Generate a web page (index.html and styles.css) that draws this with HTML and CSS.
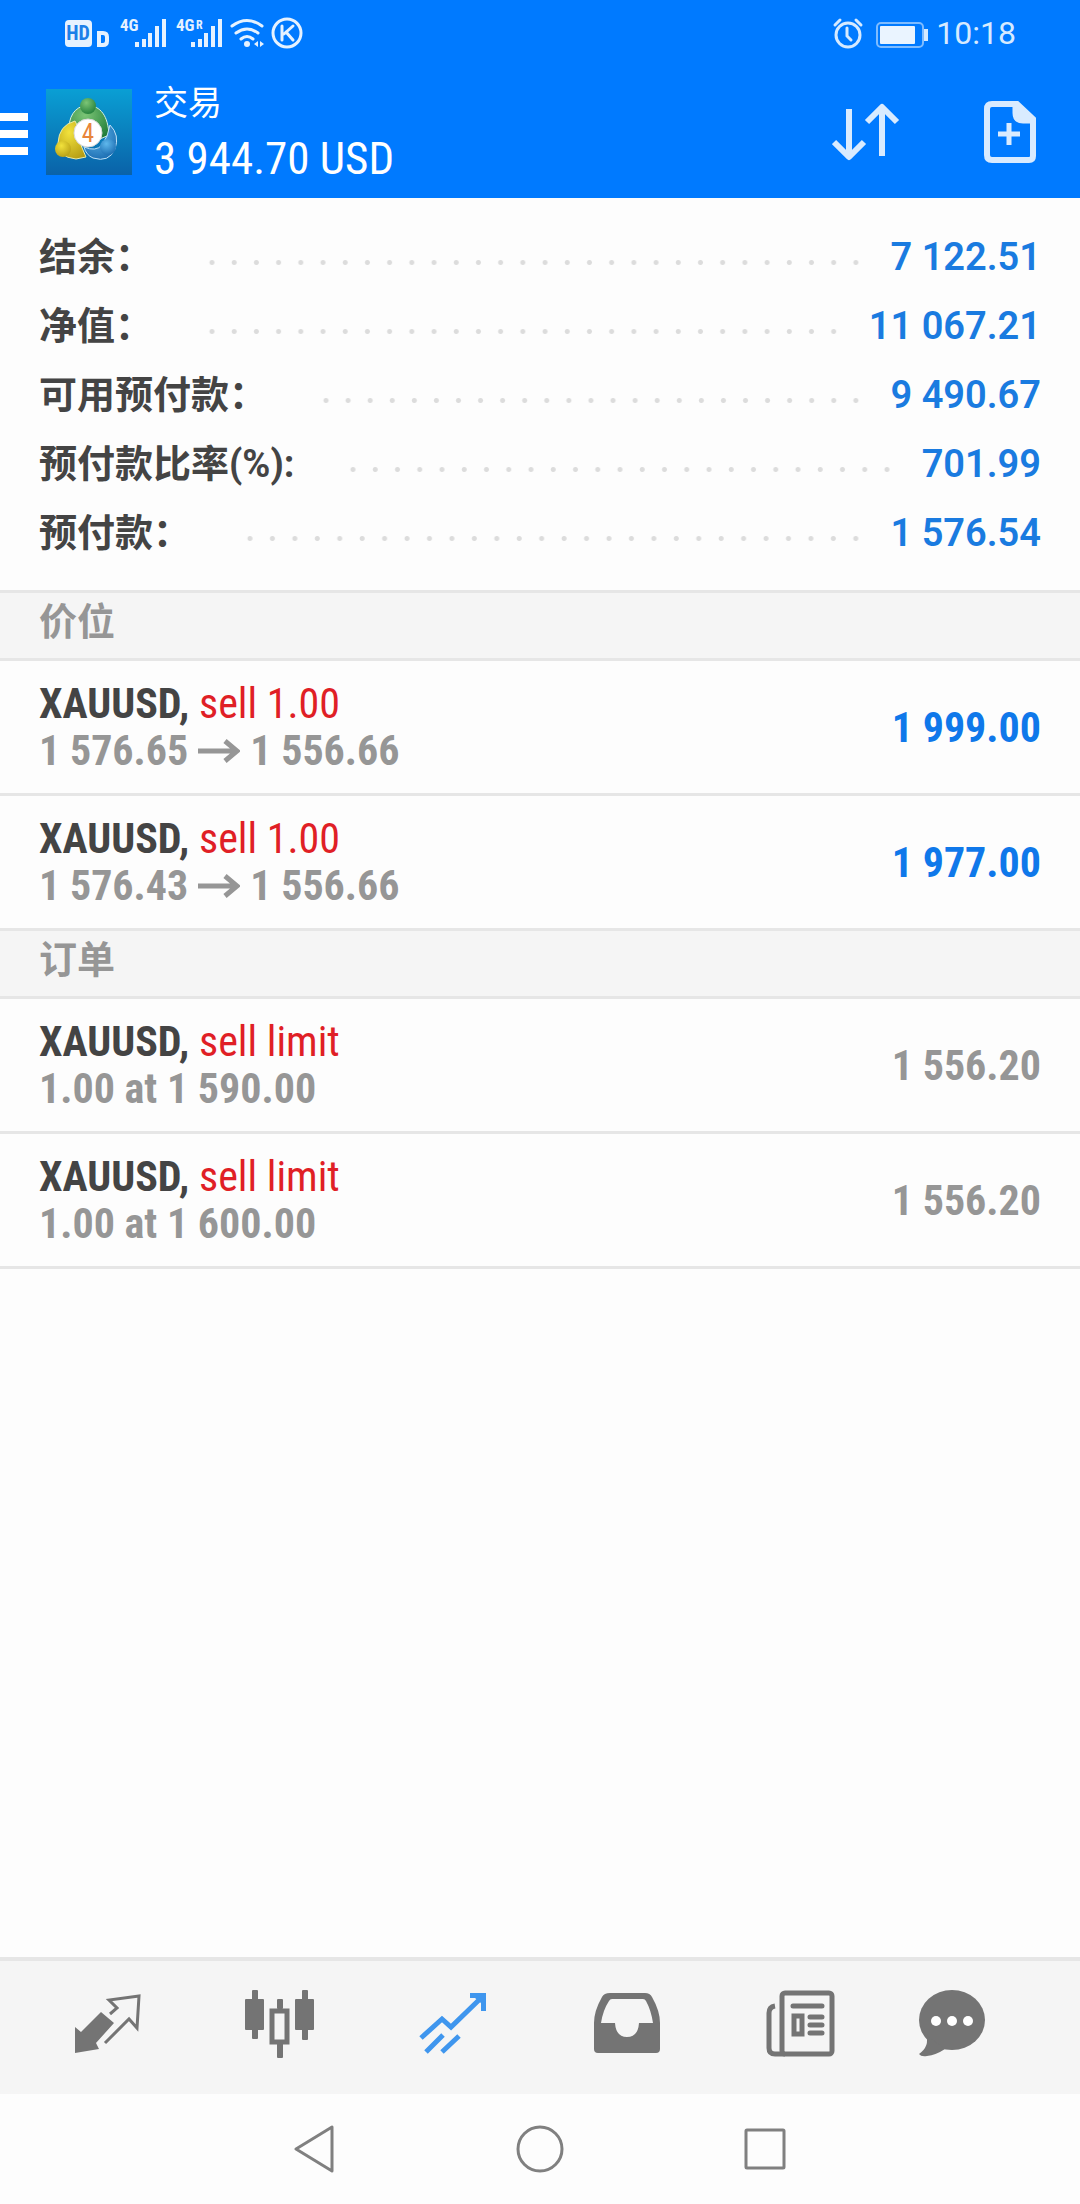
FILE: index.html
```html
<!DOCTYPE html>
<html lang="zh-CN">
<head>
<meta charset="utf-8">
<meta name="viewport" content="width=device-width, initial-scale=1">
<title>交易</title>
<link rel="stylesheet" href="styles.css">
</head>
<body>
<header class="top">
  <div class="status">
    <svg class="status-icons" width="240" height="40" viewBox="0 -4 240 40" aria-hidden="true">
      <rect x="1" y="3" width="27" height="27" rx="4" fill="#e6f2ff"/>
      <text x="14" y="23" class="hd">HD</text>
      <path d="M35 16h4q4 0 4 4v4q0 4-4 4h-4z" fill="none" stroke="#e6f2ff" stroke-width="4"/>
      <text x="56" y="14" class="net">4G</text>
      <path d="M73 30v-5M80 30v-8M86 30v-14M93 30V9M100 30V2" stroke="#e6f2ff" stroke-width="4"/>
      <text x="112" y="14" class="net">4G</text>
      <text x="132" y="12" class="roam">R</text>
      <path d="M129 30v-5M136 30v-8M142 30v-14M149 30V9M156 30V2" stroke="#e6f2ff" stroke-width="4"/>
      <g fill="none" stroke="#e6f2ff" stroke-width="3" stroke-linecap="round">
        <path d="M168 9q15-11 30 0M172 16q11-8 22 0M177 22q6-5 12 0"/>
        <circle cx="223" cy="16" r="14"/>
        <path d="M218 9v14M229 9l-9 8M222 15l7 8"/>
      </g>
      <circle cx="183" cy="27" r="3" fill="#e6f2ff"/>
      <path d="M190 27l4-3v6zM200 27l-4-3v6z" fill="#e6f2ff"/>
    </svg>
    <div class="status-right">
      <svg width="96" height="32" viewBox="0 0 96 32" aria-hidden="true">
        <g fill="none" stroke="#d6eaff" stroke-width="3" stroke-linecap="round">
          <circle cx="16" cy="18" r="12"/>
          <path d="M15 11v8l4 4M3 8l5-5M29 8l-5-5"/>
        </g>
        <rect x="45" y="6" width="46" height="24" rx="4" fill="none" stroke="#7fbcff" stroke-width="2"/>
        <rect x="48" y="9" width="35" height="18" rx="1" fill="#eaf4ff"/>
        <path d="M92 12h4v12h-4z" fill="#d6eaff"/>
      </svg>
      <time class="clock">10:18</time>
    </div>
  </div>
  <div class="bar">
    <button class="icon-btn menu" aria-label="菜单">
      <svg width="28" height="46" viewBox="0 -4 28 46"><path d="M0 4h28M0 21h28M0 38h28" stroke="#fff" stroke-width="8"/></svg>
    </button>
    <svg class="logo" width="86" height="86" viewBox="0 0 86 86" aria-hidden="true">
      <defs>
        <linearGradient id="sky" x1="0" y1="0" x2="0" y2="1"><stop offset="0" stop-color="#0a9fd4"/><stop offset="1" stop-color="#0a62a8"/></linearGradient>
        <radialGradient id="leaf" cx=".4" cy=".3" r=".8"><stop offset="0" stop-color="#7cc576"/><stop offset="1" stop-color="#1d7a36"/></radialGradient>
        <radialGradient id="sun" cx=".4" cy=".3" r=".8"><stop offset="0" stop-color="#f2e23c"/><stop offset="1" stop-color="#b39a12"/></radialGradient>
        <radialGradient id="sea" cx=".4" cy=".3" r=".8"><stop offset="0" stop-color="#5fb8ec"/><stop offset="1" stop-color="#1767ad"/></radialGradient>
      </defs>
      <rect width="86" height="86" fill="url(#sky)"/>
      <path d="M23 44c-1-16 5-26 18-28 14 1 21 11 22 30l-9 4q-4-16-13-16t-10 10z" fill="url(#leaf)" stroke="#d8f0e0"/>
      <circle cx="42" cy="17" r="8" fill="url(#leaf)"/>
      <path d="M29 32q-16 4-17 22-1 14 18 16l10-2-6-14q-6-6-2-16z" fill="url(#sun)" stroke="#e8eaa8"/>
      <circle cx="17" cy="60" r="8" fill="url(#sun)"/>
      <path d="M64 36q10 10 5 24-6 14-22 9-7-3-9-11 12 5 18-2 6-8 8-20z" fill="url(#sea)" stroke="#bfe2f8"/>
      <circle cx="62" cy="58" r="8" fill="url(#sea)"/>
      <circle cx="42" cy="44" r="14" fill="#fff" stroke="#d9d9d9"/>
      <text x="42" y="53" class="logo-num">4</text>
    </svg>
    <div class="heading">
      <h1 class="title">交易</h1>
      <div class="profit">3 944.70 USD</div>
    </div>
    <div class="actions">
      <button class="icon-btn" aria-label="排序">
        <svg width="68" height="60" viewBox="0 0 68 60" fill="none" stroke="#d9ebff" stroke-width="6" stroke-linejoin="round"><path d="M17 7v48M2 40l15 15 15-15M50 54V5M35 20L50 5l15 15"/></svg>
      </button>
      <button class="icon-btn" aria-label="新订单">
        <svg width="52" height="62" viewBox="0 0 52 62"><path d="M8 3h25l16 15v37q0 4-4 4H8q-5 0-5-5V8q0-5 5-5z" fill="none" stroke="#d9ebff" stroke-width="6"/><path d="M31 3l18 17H39q-8 0-8-8zM14 33h22M25 22v22" fill="#d9ebff" stroke="#d9ebff" stroke-width="5"/></svg>
      </button>
    </div>
  </div>
</header>

<main class="content">
  <dl class="summary">
    <div class="sum-row"><dt>结余：</dt><dd>7 122.51</dd></div>
    <div class="sum-row"><dt>净值：</dt><dd>11 067.21</dd></div>
    <div class="sum-row"><dt>可用预付款：</dt><dd>9 490.67</dd></div>
    <div class="sum-row"><dt>预付款比率(%):</dt><dd>701.99</dd></div>
    <div class="sum-row"><dt>预付款：</dt><dd>1 576.54</dd></div>
  </dl>

  <section>
    <h2 class="section-title">价位</h2>
    <ul class="list">
      <li class="item">
        <div><div class="symbol"><b>XAUUSD,</b> <span class="side">sell 1.00</span></div>
        <div class="detail">1 576.65 <svg class="arrow" width="42" height="24" viewBox="0 0 42 24" role="img" aria-label="至"><path d="M0 12h39M27 2l12 10-12 10"/></svg> 1 556.66</div></div>
        <div class="value gain">1 999.00</div>
      </li>
      <li class="item">
        <div><div class="symbol"><b>XAUUSD,</b> <span class="side">sell 1.00</span></div>
        <div class="detail">1 576.43 <svg class="arrow" width="42" height="24" viewBox="0 0 42 24" role="img" aria-label="至"><path d="M0 12h39M27 2l12 10-12 10"/></svg> 1 556.66</div></div>
        <div class="value gain">1 977.00</div>
      </li>
    </ul>
  </section>

  <section>
    <h2 class="section-title">订单</h2>
    <ul class="list">
      <li class="item">
        <div><div class="symbol"><b>XAUUSD,</b> <span class="side">sell limit</span></div>
        <div class="detail">1.00 at 1 590.00</div></div>
        <div class="value">1 556.20</div>
      </li>
      <li class="item">
        <div><div class="symbol"><b>XAUUSD,</b> <span class="side">sell limit</span></div>
        <div class="detail">1.00 at 1 600.00</div></div>
        <div class="value">1 556.20</div>
      </li>
    </ul>
  </section>
</main>

<nav class="tabs">
  <button class="icon-btn" aria-label="报价">
    <svg width="70" height="70" viewBox="0 0 70 70"><path d="M3 38l6 5 20-20 13 11-18 20 3 6-24 4z" fill="#747474"/><path d="M38 25l7-6-8-8 30-4-2 32-8-9-24 24" fill="none" stroke="#747474" stroke-width="3"/></svg>
  </button>
  <button class="icon-btn" aria-label="图表">
    <svg width="70" height="70" viewBox="0 0 70 70" fill="#747474"><rect x="0" y="10" width="19" height="31" rx="1"/><rect x="7" y="1" width="6" height="49" rx="1"/><rect x="27" y="22" width="15" height="31" fill="none" stroke="#747474" stroke-width="5"/><rect x="32" y="10" width="6" height="10" rx="1"/><rect x="32" y="54" width="6" height="15" rx="1"/><rect x="50" y="10" width="19" height="31" rx="1"/><rect x="57" y="1" width="6" height="50" rx="1"/></svg>
  </button>
  <button class="icon-btn" aria-label="交易" aria-current="page">
    <svg width="70" height="70" viewBox="0 0 70 70"><path d="M3 49l21-19 9 8L63 9M8 63l17-17M24 63l17-16" fill="none" stroke="#3f96ee" stroke-width="5"/><path d="M52 4h16v18h-5V14l-6-5h-5z" fill="#3f96ee"/></svg>
  </button>
  <button class="icon-btn" aria-label="历史">
    <svg width="70" height="70" viewBox="0 0 70 70"><path fill="#747474" fill-rule="evenodd" d="M18 4h35q5 0 7 4 8 14 8 26v26q0 4-4 4H6q-4 0-4-4V34Q2 22 10 8q2-4 8-4zM20 10q-2 0-3 2-6 9-8 22h14q1 14 12 14t12-14h14q-2-13-7-22-1-2-3-2z"/></svg>
  </button>
  <button class="icon-btn" aria-label="新闻">
    <svg width="70" height="70" viewBox="0 0 70 70" fill="none" stroke="#747474" stroke-width="5"><rect x="17" y="4" width="50" height="61" rx="3"/><path d="M10 17q-6 1-6 7v35q0 6 6 6h10"/><path d="M28 17h29M45 28h12M45 36h12M45 44h12" stroke-linecap="round"/><rect x="29" y="27" width="8" height="18"/></svg>
  </button>
  <button class="icon-btn" aria-label="消息">
    <svg width="70" height="70" viewBox="0 0 70 70"><ellipse cx="35" cy="31" rx="33" ry="30" fill="#747474"/><path d="M9 46q4 11-7 19 2 3 8 2 9-1 18-7z" fill="#747474"/><g fill="#fff"><circle cx="19" cy="32" r="5"/><circle cx="35" cy="32" r="5"/><circle cx="51" cy="32" r="5"/></g></svg>
  </button>
</nav>

<nav class="system">
  <button class="icon-btn" aria-label="返回"><svg width="48" height="48" viewBox="0 0 48 48"><path d="M41 2v44L5 24z"/></svg></button>
  <button class="icon-btn" aria-label="主屏幕"><svg width="48" height="48" viewBox="0 0 48 48"><circle cx="24" cy="24" r="22"/></svg></button>
  <button class="icon-btn" aria-label="最近任务"><svg width="48" height="48" viewBox="0 0 48 48"><rect x="5" y="5" width="38" height="38" rx="1"/></svg></button>
</nav>
</body>
</html>
```
FILE: styles.css
```css
* {
  box-sizing: border-box;
}

body {
  margin: 0;
  min-height: 100vh;
  display: flex;
  flex-direction: column;
  background: #fdfdfd;
  color: #444;
  font-family: Roboto, "Noto Sans CJK SC", sans-serif;
}

h1, h2, dl, dd, ul {
  margin: 0;
  padding: 0;
}

svg {
  display: block;
}

.icon-btn {
  display: flex;
  align-items: center;
  justify-content: center;
  padding: 0;
  border: 0;
  background: none;
}

/* Header */
.top {
  background: #007aff;
  color: #fff;
}

.status {
  display: flex;
  justify-content: space-between;
  align-items: center;
  height: 66px;
  padding: 0 64px;
}

.status-right {
  display: flex;
  align-items: center;
  gap: 8px;
}

.clock {
  font-size: 32px;
  line-height: 40px;
  color: #d6eaff;
}

.hd, .net, .roam, .logo-num {
  font-family: "Roboto Condensed", "Liberation Sans Narrow", Roboto, sans-serif;
}

.hd {
  font-size: 20px;
  font-weight: 700;
  fill: #1c7fe8;
  text-anchor: middle;
}

.net {
  font-size: 17px;
  font-weight: 700;
  fill: #e6f2ff;
}

.roam {
  font-size: 12px;
  font-weight: 700;
  fill: #e6f2ff;
}

.logo-num {
  font-size: 25px;
  fill: #e8853a;
  text-anchor: middle;
}

.bar {
  display: flex;
  align-items: center;
  height: 132px;
  padding-right: 44px;
}

.logo {
  margin: 0 22px 0 18px;
}

.heading {
  padding-top: 2px;
}

.title {
  font-size: 34px;
  font-weight: 400;
  line-height: 52px;
}

.profit {
  font-size: 45px;
  line-height: 60px;
  font-family: "Roboto Condensed", "Liberation Sans Narrow", Roboto, sans-serif;
}

.actions {
  display: flex;
  align-items: center;
  gap: 84px;
  margin-left: auto;
}

/* Account summary */
.content {
  flex: 1;
}

.summary {
  padding: 24px 39px 23px;
  border-bottom: 3px solid #e6e6e6;
}

.sum-row {
  display: flex;
  align-items: center;
  height: 69px;
  font-size: 38px;
  font-weight: 700;
}

.sum-row::before {
  content: "";
  order: 1;
  flex: 1;
  height: 5px;
  margin: 12px 24px 0 48px;
  background: radial-gradient(circle, #dcdcdc 2px, transparent 3px) 0 0 / 22px 5px space no-repeat;
}

.sum-row dt {
  padding-bottom: 6px;
}

.sum-row dd {
  order: 2;
  color: #1a7be0;
  font-weight: 600;
}

/* Positions and orders */
.section-title {
  padding: 0 39px 7px;
  border-bottom: 3px solid #e6e6e6;
  background: #f5f5f5;
  color: #969696;
  font-size: 38px;
  font-weight: 700;
  line-height: 58px;
}

.list {
  list-style: none;
}

.item {
  display: flex;
  align-items: center;
  justify-content: space-between;
  height: 135px;
  padding: 0 39px;
  border-bottom: 3px solid #e6e6e6;
  font-family: "Roboto Condensed", "Liberation Sans Narrow", Roboto, sans-serif;
  font-size: 42px;
  line-height: 47px;
}

.side {
  color: #e01f26;
}

.detail {
  display: flex;
  align-items: center;
  gap: 10px;
  color: #969696;
  font-weight: 700;
}

.arrow {
  fill: none;
  stroke: #969696;
  stroke-width: 5px;
}

.value {
  color: #969696;
  font-weight: 700;
}

.gain {
  color: #0f78ea;
}

/* Bottom bars */
.tabs {
  display: grid;
  grid-template-columns: repeat(5, 4fr) 3fr;
  height: 137px;
  padding: 0 63px 7px 20px;
  border-top: 4px solid #e6e6e6;
  background: #f5f5f5;
}

.system {
  display: flex;
  justify-content: center;
  height: 110px;
}

.system .icon-btn {
  width: 225px;
}

.system svg {
  fill: none;
  stroke: #808080;
  stroke-width: 3px;
  stroke-linejoin: round;
}
```
